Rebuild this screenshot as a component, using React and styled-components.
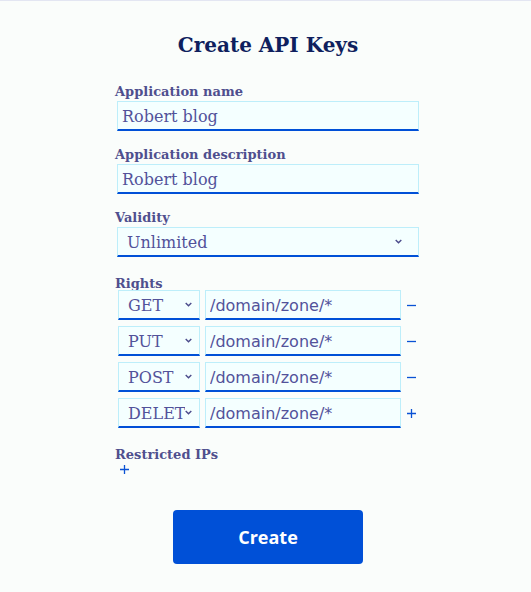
import React from "react";
import styled, { createGlobalStyle } from "styled-components";

const GlobalStyle = createGlobalStyle`
  html, body { margin: 0; padding: 0; background: #fafdfb; }
  body { font-family: "DejaVu Serif", serif; }
  * { box-sizing: border-box; }
`;

const Page = styled.div`
  min-height: 100vh;
  border-top: 1px solid #e3e6f2;
  padding-left: 5px;
  display: flex;
  flex-direction: column;
  align-items: center;
`;

const Title = styled.h1`
  margin: 32px 0 0;
  font-family: "DejaVu Serif", serif;
  font-size: 20px;
  line-height: 24px;
  font-weight: 700;
  color: #0f1f5e;
`;

const Form = styled.form`
  width: 306px;
  margin-top: 26px;
  display: flex;
  flex-direction: column;
`;

const Field = styled.div`
  display: flex;
  flex-direction: column;
  margin-bottom: ${(p) => p.$mb ?? 15}px;
`;

const Label = styled.label`
  font-family: "DejaVu Serif", serif;
  font-size: 13px;
  line-height: 17px;
  font-weight: 700;
  color: #4f4f8e;
  margin-bottom: ${(p) => p.$mb ?? 1}px;
`;

const boxBase = `
  height: 30px;
  border: 1px solid #bdeefa;
  border-bottom: 2px solid #0050d7;
  border-radius: 0;
  background: #f4ffff;
  color: #52529a;
  font-size: 16px;
`;

const TextInput = styled.input`
  ${boxBase}
  margin: 0 ${(p) => (p.$inRow ? 0 : 2)}px 0 ${(p) => (p.$inRow ? 5 : 2)}px;
  width: ${(p) => (p.$w ? `${p.$w}px` : "auto")};
  padding: 2px 4px 0;
  font-family: ${(p) => (p.$sans ? `"DejaVu Sans", sans-serif` : `"DejaVu Serif", serif`)};
  outline: none;
`;

const SelectBox = styled.div`
  ${boxBase}
  display: flex;
  align-items: center;
  margin: 0 ${(p) => (p.$compact ? 0 : 2)}px;
  width: ${(p) => (p.$w ? `${p.$w}px` : "auto")};
  flex: none;
  padding: 2px ${(p) => (p.$compact ? 7 : 16)}px 0 9px;
  font-family: "DejaVu Serif", serif;
  cursor: pointer;
`;

const SelectValue = styled.span`
  flex: 1;
  min-width: 0;
  overflow: hidden;
  white-space: nowrap;
`;

const Chevron = styled.svg`
  flex: none;
  width: 7px;
  height: 5px;
  margin-top: -2px;
`;

const Rows = styled.div`
  display: flex;
  flex-direction: column;
  gap: 6px;
  margin-bottom: 18px;
`;

const RightRow = styled.div`
  display: flex;
  align-items: center;
  margin-left: 3px;
`;

const IconButton = styled.button`
  border: none;
  background: none;
  padding: 0;
  width: 9px;
  height: 9px;
  margin-left: ${(p) => p.$ml ?? 6}px;
  margin-top: ${(p) => p.$mt ?? 0}px;
  display: flex;
  cursor: pointer;
`;

const Submit = styled.button`
  align-self: center;
  margin-top: 36px;
  width: 190px;
  height: 54px;
  border: none;
  border-radius: 4px;
  background: #0050d7;
  color: #ffffff;
  font-family: "Open Sans", "Noto Sans", sans-serif;
  font-size: 18px;
  font-weight: 700;
  cursor: pointer;
`;

const ChevronIcon = () => (
  <Chevron viewBox="0 0 7 5">
    <path d="M0.7 0.9 L3.5 3.7 L6.3 0.9" fill="none" stroke="#4b4b8b" strokeWidth="1.4" />
  </Chevron>
);

const Plus = () => (
  <svg width="9" height="9" viewBox="0 0 9 9">
    <path d="M4.5 0 V9 M0 4.5 H9" stroke="#0a52d4" strokeWidth="1.3" />
  </svg>
);

const Minus = () => (
  <svg width="9" height="9" viewBox="0 0 9 9">
    <path d="M0 4.5 H9" stroke="#0a52d4" strokeWidth="1.3" />
  </svg>
);

const Select = ({ value, w, compact }) => (
  <SelectBox $w={w} $compact={compact}>
    <SelectValue>{value}</SelectValue>
    <ChevronIcon />
  </SelectBox>
);

const rights = [
  { method: "GET", path: "/domain/zone/*", last: false },
  { method: "PUT", path: "/domain/zone/*", last: false },
  { method: "POST", path: "/domain/zone/*", last: false },
  { method: "DELETE", path: "/domain/zone/*", last: true },
];

export default function App() {
  return (
    <>
      <GlobalStyle />
      <Page>
        <Title>Create API Keys</Title>
        <Form onSubmit={(e) => e.preventDefault()}>
          <Field>
            <Label>Application name</Label>
            <TextInput defaultValue="Robert blog" />
          </Field>
          <Field>
            <Label>Application description</Label>
            <TextInput defaultValue="Robert blog" />
          </Field>
          <Field $mb={18}>
            <Label>Validity</Label>
            <Select value="Unlimited" />
          </Field>
          <Label $mb={-2}>Rights</Label>
          <Rows>
            {rights.map((r, i) => (
              <RightRow key={i}>
                <Select value={r.method} w={82} compact />
                <TextInput $sans $inRow $w={196} defaultValue={r.path} />
                <IconButton type="button">{r.last ? <Plus /> : <Minus />}</IconButton>
              </RightRow>
            ))}
          </Rows>
          <Label $mb={-1}>Restricted IPs</Label>
          <IconButton type="button" $ml={5} $mt={3}>
            <Plus />
          </IconButton>
          <Submit type="submit">Create</Submit>
        </Form>
      </Page>
    </>
  );
}
